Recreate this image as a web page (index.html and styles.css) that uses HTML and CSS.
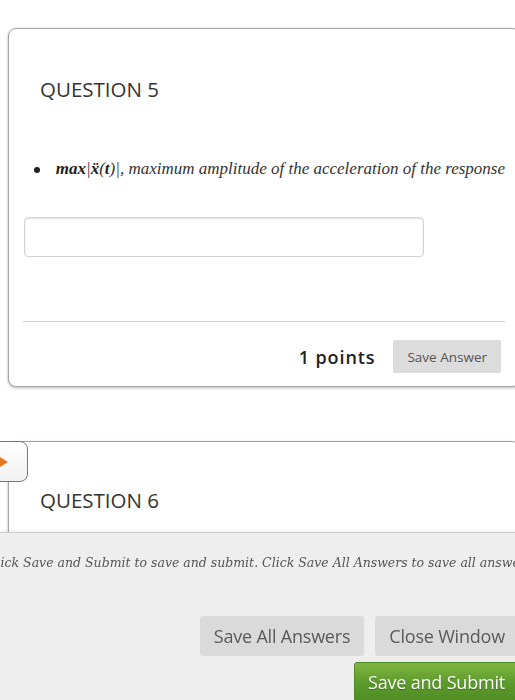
FILE: index.html
```html
<!DOCTYPE html>
<html lang="en">
<head>
  <meta charset="UTF-8" />
  <title>Take Test</title>
  <link rel="stylesheet" href="styles.css">
</head>
<body>
  <div class="page">
    <div class="question">
      <h2>QUESTION 5</h2>
      <div class="bullet-row">
        <span class="bullet"></span>
        <span class="math"><b>max</b>|<b>ẍ</b>(<b>t</b>)|, maximum amplitude of the acceleration of the response</span>
      </div>
      <input class="answer" type="text" />
      <hr class="divider" />
      <div class="question-foot">
        <span class="points">1 points</span>
        <button class="btn-small">Save Answer</button>
      </div>
    </div>

    <div class="question second">
      <div class="tab"><span class="arrow"></span></div>
      <h2>QUESTION 6</h2>
      <div class="spacer"></div>
    </div>
  </div>

  <div class="submit-bar">
    <p class="note">Click Save and Submit to save and submit. Click Save All Answers to save all answers.</p>
    <div class="actions">
      <div class="action-row">
        <button class="btn">Save All Answers</button>
        <button class="btn">Close Window</button>
      </div>
      <button class="btn btn-green">Save and Submit</button>
    </div>
  </div>
</body>
</html>
```

FILE: styles.css
```css
body {
  margin: 0;
  background: #fff;
  font-family: "Open Sans", Arial, sans-serif;
  width: 515px;
  height: 700px;
  overflow: hidden;
}
.page {
  width: 540px;
  padding-top: 28px;
}
.question {
  position: relative;
  margin-left: 8px;
  width: 482px;
  padding: 46px 14px 13px;
  border: 1px solid #a6a6a6;
  border-radius: 8px;
  box-shadow: 0 1px 3px rgba(0,0,0,0.3);
  background: #fff;
}
.question h2 {
  margin: 0 0 0 17px;
  font-size: 20.5px;
  line-height: 28px;
  font-weight: 400;
  color: #333;
}
.bullet-row {
  display: flex;
  align-items: center;
  margin-top: 55px;
  height: 22px;
}
.bullet {
  width: 6px;
  height: 6px;
  margin: 1px 16px 0 11px;
  border-radius: 50%;
  background: #222;
}
.math {
  font-family: "Liberation Serif", serif;
  font-style: italic;
  font-size: 17px;
  line-height: 22px;
  color: #333;
  white-space: nowrap;
}
.math b {
  color: #222;
}
.answer {
  display: block;
  box-sizing: border-box;
  width: 400px;
  height: 40px;
  margin: 37px 0 0 1px;
  border: 1px solid #d4d4d4;
  border-radius: 4px;
  box-shadow: inset 0 1px 2px rgba(0,0,0,0.12);
}
.divider {
  margin: 64px 0 0;
  border: 0;
  border-top: 1px solid #cfcfcf;
}
.question-foot {
  display: flex;
  justify-content: flex-end;
  align-items: center;
  gap: 18px;
  margin-top: 18px;
  padding-right: 4px;
}
.points {
  font-size: 18px;
  font-weight: 600;
  letter-spacing: 0.9px;
  color: #222;
}
.btn-small {
  height: 33px;
  padding: 0 14px;
  border: 0;
  border-radius: 2px;
  background: #dcdcdc;
  color: #555;
  font-family: "Open Sans", Arial, sans-serif;
  font-size: 13.5px;
}
.question.second {
  margin-top: 54px;
  padding-top: 44px;
}
.spacer {
  height: 200px;
}
.tab {
  position: absolute;
  left: -21px;
  top: -1px;
  width: 38px;
  height: 39px;
  border: 1px solid #777;
  border-radius: 8px;
  background: linear-gradient(#fff, #f1f1f1);
}
.arrow {
  position: absolute;
  left: 11px;
  top: 15px;
  border-left: 8px solid #e87722;
  border-top: 5px solid transparent;
  border-bottom: 5px solid transparent;
}
.submit-bar {
  position: fixed;
  left: 0;
  bottom: 0;
  width: 519px;
  height: 167px;
  padding-right: 21px;
  background: #eee;
  border-top: 1px solid #cdcdcd;
  box-shadow: 0 -1px 3px rgba(0,0,0,0.08);
}
.note {
  margin: 20px 0 0 -13px;
  font-family: "DejaVu Serif", Georgia, serif;
  font-style: italic;
  font-size: 12.5px;
  line-height: 20px;
  color: #555;
  white-space: nowrap;
}
.actions {
  display: flex;
  flex-direction: column;
  align-items: flex-end;
  gap: 6px;
  margin-top: 43px;
}
.action-row {
  display: flex;
  gap: 11px;
}
.btn {
  height: 40px;
  padding: 0 14px;
  border: 0;
  border-radius: 3px;
  background: #dadada;
  color: #5a5a5a;
  font-family: "Open Sans", Arial, sans-serif;
  font-size: 18px;
  letter-spacing: -0.2px;
}
.btn-green {
  padding: 0 13px;
  border: 1px solid #4d8a22;
  background: linear-gradient(#80b541, #5b9a2b 55%, #4f8d24);
  color: #fff;
  text-shadow: 0 1px 1px rgba(0,0,0,0.3);
}
```
